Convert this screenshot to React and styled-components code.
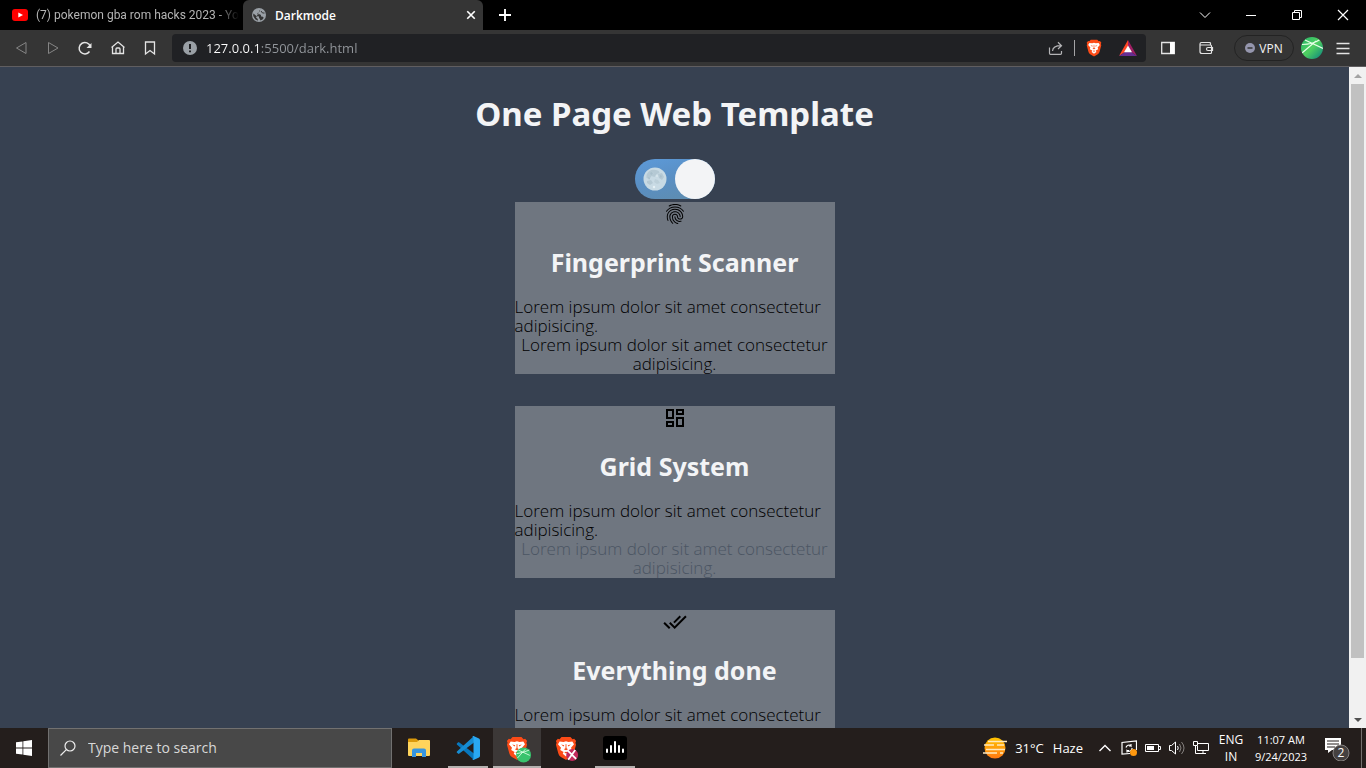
import React, { useState } from "react";
import styled, { createGlobalStyle, css } from "styled-components";
import { MdFingerprint, MdOutlineDashboard, MdDoneAll } from "react-icons/md";

const ui = `"Open Sans", "Noto Sans", sans-serif`;

const Global = createGlobalStyle`
  * { box-sizing: border-box; }
  body { margin: 0; background: #374151; }
  button { font: inherit; color: inherit; background: none; border: 0; padding: 0; cursor: pointer; }
  svg { display: block; flex: none; }
`;

const Screen = styled.div`
  height: 100vh;
  display: flex;
  flex-direction: column;
  overflow: hidden;
  font-family: ${ui};
`;

const TabBar = styled.header`
  display: flex;
  flex: none;
  height: 30px;
  background: #000;
  color: #fff;
`;

const Tab = styled.div`
  display: flex;
  align-items: center;
  width: ${(p) => (p.$active ? 240 : 243)}px;
  padding: 0 ${(p) => (p.$active ? 6 : 2)}px 0 ${(p) => (p.$active ? 8 : 12)}px;
  gap: 8px;
  font-family: ${(p) => (p.$active ? ui : `Roboto, ${ui}`)};
  font-size: 12px;
  font-weight: ${(p) => (p.$active ? 600 : 400)};
  color: ${(p) => (p.$active ? "#fff" : "#b4b4b4")};
  background: ${(p) => (p.$active ? "#353535" : "transparent")};
  border-radius: 6px 6px 0 0;
`;

const TabTitle = styled.span`
  flex: 1;
  min-width: 0;
  overflow: hidden;
  white-space: nowrap;
  ${(p) => p.$fade && css`mask-image: linear-gradient(90deg, #000 88%, transparent 99%);`}
`;

const IconButton = styled.button`
  display: grid;
  place-items: center;
  flex: none;
  width: ${(p) => p.$w || 32}px;
  height: ${(p) => p.$h || 30}px;
`;

const WindowControls = styled.div`
  display: flex;
  margin-left: auto;
`;

const Toolbar = styled.nav`
  display: flex;
  flex: none;
  align-items: center;
  height: 37px;
  padding: 0 3px 0 5px;
  background: #353535;
  border-bottom: 1px solid #605e60;
  color: #e4e4e4;
`;

const AddressBar = styled.form`
  display: flex;
  flex: 1;
  align-items: center;
  height: 28px;
  margin: 0 6px;
  padding: 0 2px 0 11px;
  gap: 9px;
  background: #202124;
  border-radius: 4px;
`;

const AddressInput = styled.input`
  flex: 1;
  min-width: 0;
  padding: 0;
  border: 0;
  outline: 0;
  font: 13px/20px ${ui};
  color: transparent;
  background: linear-gradient(90deg, #fff 55px, #93979c 55px);
  background-clip: text;
`;

const AddressActions = styled.div`
  display: flex;
  align-items: center;
`;

const Divider = styled.span`
  width: 1px;
  height: 16px;
  margin: 0 2px;
  background: #a4a4a6;
`;

const VpnButton = styled.button`
  display: flex;
  align-items: center;
  justify-content: center;
  gap: 4px;
  width: 60px;
  height: 26px;
  margin: 0 7px 0 6px;
  border: 1px solid #232323;
  border-radius: 13px;
  font-size: 12px;
  color: #f4f4f4;
`;

const Viewport = styled.div`
  display: flex;
  flex: 1;
  min-height: 0;
`;

const Page = styled.main`
  flex: 1;
  min-width: 0;
  overflow: hidden;
  display: flex;
  flex-direction: column;
  align-items: center;
  padding-top: 28px;
  background: #374151;
  font-family: "Noto Sans", "Open Sans", sans-serif;
`;

const Title = styled.h1`
  flex: none;
  margin: 0 0 26px;
  font-size: 33px;
  line-height: 38px;
  font-weight: 700;
  color: #f3f4f6;
`;

const Toggle = styled.label`
  position: relative;
  display: flex;
  flex: none;
  align-items: center;
  justify-content: space-between;
  flex-direction: ${(p) => (p.$on ? "row" : "row-reverse")};
  width: 80px;
  height: 40px;
  margin-bottom: 3px;
  border-radius: 20px;
  background: linear-gradient(165deg, #5c98d5 10%, #5a8fc4 45%, #5f8cab 100%);
  cursor: pointer;
`;

const ToggleInput = styled.input`
  position: absolute;
  inset: 0;
  width: 100%;
  height: 100%;
  margin: 0;
  opacity: 0;
`;

const MoonSlot = styled.span`
  display: grid;
  place-items: center;
  width: 40px;
  height: 40px;
`;

const Knob = styled.span`
  width: 40px;
  height: 40px;
  border-radius: 50%;
  background: #f3f4f6;
`;

const Cards = styled.div`
  display: grid;
  gap: 32px;
  width: 320px;
`;

const Card = styled.article`
  display: flex;
  flex-direction: column;
  align-items: center;
  padding-bottom: 1px;
  background: #6f7680;
  color: #000;
`;

const CardTitle = styled.h2`
  margin: 21px 0 19px;
  font-size: 25px;
  line-height: 31px;
  font-weight: 700;
  color: #f3f4f6;
`;

const CardText = styled.p`
  width: 100%;
  margin: 0;
  font-family: "Open Sans", "Noto Sans", sans-serif;
  font-size: 17px;
  font-weight: 350;
  line-height: 19px;
  text-align: ${(p) => (p.$center ? "center" : "left")};
  color: ${(p) => (p.$muted ? "#4b5563" : "#000")};
`;

const Scrollbar = styled.div`
  display: flex;
  flex-direction: column;
  flex: none;
  width: 17px;
  background: #f1f1f1;
`;

const Thumb = styled.div`
  flex: 574;
  margin: 0 2px;
  background: #c1c1c1;
`;

const Track = styled.div`
  flex: 53;
`;

const Taskbar = styled.footer`
  display: flex;
  flex: none;
  align-items: stretch;
  height: 40px;
  background: #241e1c;
  color: #fff;
`;

const SearchBox = styled.label`
  display: flex;
  align-items: center;
  flex: none;
  width: 344px;
  padding: 0 11px;
  gap: 12px;
  background: #484848;
  border: 1px solid #727170;
`;

const SearchInput = styled.input`
  flex: 1;
  min-width: 0;
  padding: 0;
  border: 0;
  outline: 0;
  background: none;
  font: 14px/20px ${ui};
  color: #fff;
  &::placeholder { color: #d8d8d8; opacity: 1; }
`;

const Apps = styled.div`
  display: flex;
  gap: 1px;
  margin-left: 3px;
`;

const AppButton = styled.button`
  display: grid;
  place-items: center;
  width: 48px;
  background: ${(p) => (p.$active ? "#3c3837" : "transparent")};
  ${(p) => p.$running && css`
    background-image: linear-gradient(#b5b1af, #b5b1af);
    background-repeat: no-repeat;
    background-position: bottom;
    background-size: ${p.$active ? 48 : 40}px 2px;
  `}
`;

const Tray = styled.div`
  display: flex;
  align-items: center;
  margin-left: auto;
`;

const Weather = styled.button`
  display: flex;
  align-items: center;
  gap: 8px;
  margin-right: 10px;
  font-size: 13px;
`;

const Temp = styled.span`
  margin-right: 1px;
`;

const TrayText = styled.button`
  width: ${(p) => p.$w}px;
  font-size: ${(p) => p.$small ? 11 : 12}px;
  line-height: 17px;
  text-align: center;
  white-space: nowrap;
`;

const ShowDesktop = styled.button`
  align-self: stretch;
  width: 5px;
  border-left: 1px solid #73706e;
`;

const Line = ({ size = 16, w = 1, children, ...rest }) => (
  <svg width={size} height={size} viewBox="0 0 16 16" fill="none" stroke="currentColor" strokeWidth={w} aria-hidden="true" {...rest}>
    {children}
  </svg>
);

const YouTube = () => (
  <svg width="16" height="12" viewBox="0 0 16 12" aria-hidden="true">
    <rect width="16" height="12" rx="3" fill="#f00" />
    <path d="M6.3 3.4 11 6 6.3 8.6Z" fill="#fff" />
  </svg>
);

const Globe = () => (
  <svg width="16" height="16" viewBox="0 0 16 16" aria-hidden="true">
    <circle cx="8" cy="8" r="7" fill="#9aa0a6" />
    <path d="M9.500 2.500 8 4v1.500L6.500 6v1.200H9l1 1v1.300h1.300l1.500 1.300-1.300 1.700-2.200 1-.3-1.500L8 11V9.500L5.500 9 2.300 6.500 2.200 9l2 3.200 2.600 1.500V12L5 10.500" fill="#353535" />
    <path d="m10 4 1.500 2h2" fill="none" stroke="#353535" />
  </svg>
);

const BraveLion = ({ width = 16, badge }) => (
  <svg width={width} height={width * 1.12} viewBox="0 0 25 28" aria-hidden="true" overflow="visible">
    <path d="M7.400 1h10.200l2.300 2.600 1.900-.4 2.200 2.500-.8 2 .7 2.200-2.600 9.600c-.6 2.200-1.800 3.500-3.500 4.600l-4.500 2.700c-.5.3-1.100.3-1.600 0l-4.500-2.700C5.500 23 4.300 21.700 3.700 19.500L1.100 9.900l.7-2.200-.8-2L3.200 3.200l1.900.4Z" fill="#fb4b17" />
    <path d="m5.300 6.200 4.400.5 2.800-.8 2.800.8 4.400-.5 1.900 3.100-3.400 4 .9 2.700-3.800 2.100.9 2.100-3.700 3-3.700-3 .9-2.100-3.800-2.100.9-2.700-3.400-4Z" fill="#fff" />
    <path d="m7 9.800 3.500.6-.8 1.600Zm11 0-3.500.6.8 1.600ZM12.100 9h.8l.2 5 1.800 1.100-2.400 1-2.400-1 1.800-1.100ZM10.500 18.600l2-.8 2 .8-2 1.300Z" fill="#fb4b17" />
    {badge === "green" && (
      <g>
        <circle cx="20" cy="21.500" r="8.500" fill="#38c36d" />
        <path d="m12.500 20 7-1.500 7-2.500M14 16l13 6m-14 3 9-10" stroke="#d9ffe2" strokeWidth="1" fill="none" />
      </g>
    )}
    {badge === "pink" && (
      <g>
        <circle cx="19.500" cy="21.500" r="6.800" fill="#c32a5d" />
        <path d="m14 16 10 10m-9 1 8-11" stroke="#fff" strokeWidth="2" />
      </g>
    )}
  </svg>
);

const BatTriangle = () => (
  <svg width="18" height="16" viewBox="0 0 18 16" aria-hidden="true">
    <path d="M9 0 0 16l6-4 3-6Z" fill="#ff4724" />
    <path d="m9 0 9 16-6-4-3-6Z" fill="#9e1f63" />
    <path d="m0 16 6-4h6l6 4Z" fill="#662d91" />
    <path d="m9 5.500 4 6.800H5Z" fill="#fff" />
  </svg>
);

const Avatar = () => (
  <svg width="22" height="22" viewBox="0 0 22 22" aria-hidden="true">
    <defs>
      <linearGradient id="avatarFill" x1="0" y1="0" x2="1" y2="1">
        <stop stopColor="#27b36b" />
        <stop offset=".5" stopColor="#4fd060" />
        <stop offset="1" stopColor="#087f80" />
      </linearGradient>
      <clipPath id="avatarClip"><circle cx="11" cy="11" r="11" /></clipPath>
    </defs>
    <g clipPath="url(#avatarClip)">
      <rect width="22" height="22" fill="url(#avatarFill)" />
      <path d="M1 7.500c8 0 13-1.500 18-5M4 3l18 8.500M1 16 15 4" fill="none" stroke="#e6ffe6" strokeWidth="1.200" />
    </g>
  </svg>
);

const Moon = () => (
  <svg width="24" height="24" viewBox="0 0 24 24" aria-hidden="true">
    <circle cx="12" cy="12" r="11.500" fill="#c8dae4" />
    <path d="M3.500 8c2-5 6-6 9-5 2 0 4 1 4 3l-3 1-2 3-3-1-2 3-3-1ZM15 7l4-1 2 4-2 3-3-2ZM4 14l4-1 2 3-3 2-3-2Z" fill="#b5c9d4" />
    <path d="m12 12 3 1 2 3-3 1-3-2ZM9 5l2 1-2 2Z" fill="#bccfd9" />
    <path d="m7 6 2-1 1 2-2 1Zm10 2 2 1-1 2-1-1ZM5 10l2 1-1 2Z" fill="#a9bfcb" />
    <circle cx="11" cy="20" r="1.200" fill="#e6f1f5" />
    <circle cx="14" cy="9" r="1" fill="#d8e6ed" />
  </svg>
);

const WindowsLogo = () => (
  <svg width="16" height="16" viewBox="0 0 16 16" fill="#fff" aria-hidden="true">
    <path d="m0 2.300 6.500-.9v6.200H0Zm7.300-1L16 0v7.600H7.300ZM0 8.400h6.500v6.200L0 13.700Zm7.300 0H16V16l-8.700-1.200Z" />
  </svg>
);

const Explorer = () => (
  <svg width="22" height="20" viewBox="0 0 22 20" aria-hidden="true">
    <path d="M0 1.500Q0 .5 1 .5h7l2.500 2V6H0Z" fill="#dc9a0b" />
    <path d="M0 4h9l2-2h10q1 0 1 1v14q0 1-1 1H1q-1 0-1-1Z" fill="#ffd45c" />
    <path d="M4 19v-6.500q0-2 2-2h10q2 0 2 2V19h-4v-4H8v4Z" fill="#3795df" />
  </svg>
);

const VsCode = () => (
  <svg width="24" height="24" viewBox="0 0 24 24" aria-hidden="true">
    <path d="m1 7.300 1.700-1.400L18 17.500V24L.9 8.600Q.4 8 1 7.300Z" fill="#0877bd" />
    <path d="m1 16.700 1.700 1.400L18 6.500V0L.9 15.400q-.5.600.1 1.300Z" fill="#168cd2" />
    <path d="m17.500 0 5.500 2.600q1 .5 1 1.600v15.600q0 1.100-1 1.600L17.500 24q-.9.200-1.200-.5 1.200.1 1.200-1.500V2q0-1.600-1.200-1.500.4-.7 1.200-.5Z" fill="#29a8f2" />
  </svg>
);

const Equalizer = () => (
  <svg width="24" height="24" viewBox="0 0 24 24" aria-hidden="true">
    <rect width="24" height="24" rx="3" fill="#000" />
    <path d="M4 13.500V16m4-6v6m4-10v10m4-6v6m4-2.500V16" stroke="#fff" strokeWidth="2" strokeLinecap="round" />
  </svg>
);

const HazeSun = () => (
  <svg width="24" height="22" viewBox="0 0 24 22" aria-hidden="true">
    <defs>
      <linearGradient id="sunFill" x1="0" y1="0" x2="0" y2="1">
        <stop stopColor="#ffc400" />
        <stop offset="1" stopColor="#ff7812" />
      </linearGradient>
    </defs>
    <circle cx="12" cy="11" r="10.500" fill="url(#sunFill)" />
    <path d="M5 4.500h19M1 8h10m3 0h7M3 12.500h19M0 16h14m3 0h3" stroke="#ffe9be" strokeWidth="1.700" />
  </svg>
);

const features = [
  { title: "Fingerprint Scanner", Icon: MdFingerprint, muted: false },
  { title: "Grid System", Icon: MdOutlineDashboard, muted: true },
  { title: "Everything done", Icon: MdDoneAll, muted: true },
];

const lorem = "Lorem ipsum dolor sit amet consectetur adipisicing.";

function BrowserTabs() {
  return (
    <TabBar>
      <Tab>
        <YouTube />
        <TabTitle $fade>(7) pokemon gba rom hacks 2023 - Yo</TabTitle>
      </Tab>
      <Tab $active>
        <Globe />
        <TabTitle>Darkmode</TabTitle>
        <IconButton $w={12} aria-label="Close tab"><Line size={12} w={2.2}><path d="m3 3 10 10M13 3 3 13" /></Line></IconButton>
      </Tab>
      <IconButton $w={44} aria-label="New tab"><Line size={12} w={2.5}><path d="M8 0v16M0 8h16" /></Line></IconButton>
      <WindowControls>
        <IconButton $w={46} aria-label="Search tabs"><Line><path d="m3 5.500 5 5 5-5" /></Line></IconButton>
        <IconButton $w={46} aria-label="Minimize"><Line><path d="M3 8.500h10" /></Line></IconButton>
        <IconButton $w={46} aria-label="Restore"><Line><path d="M3.500 5.500h7v7h-7ZM5.500 5.500v-2h7v7h-2" /></Line></IconButton>
        <IconButton $w={46} aria-label="Close"><Line w={1.2}><path d="m3 3 10 10M13 3 3 13" /></Line></IconButton>
      </WindowControls>
    </TabBar>
  );
}

function BrowserToolbar() {
  return (
    <Toolbar>
      <IconButton aria-label="Back"><Line color="#858585"><path d="M13 2.500v11L3.500 8Z" /></Line></IconButton>
      <IconButton aria-label="Forward"><Line color="#858585"><path d="M3.500 2.500v11L13 8Z" /></Line></IconButton>
      <IconButton aria-label="Reload"><Line w={1.5}><path d="M12.500 11.500a5.700 5.700 0 1 1 .8-5" /><path d="M14.500 3v5h-5Z" fill="currentColor" stroke="none" /></Line></IconButton>
      <IconButton $w={33} aria-label="Home"><Line w={1.3}><path d="M2.500 7v6.500h11V7M1.500 7.500 8 2l6.500 5.500M6 13.500V9q0-1 1-1h2q1 0 1 1v4.500" /></Line></IconButton>
      <IconButton aria-label="Bookmark"><Line w={1.3}><path d="M3.500 2h9v12L8 10.500 3.500 14Z" /></Line></IconButton>
      <AddressBar onSubmit={(e) => e.preventDefault()}>
        <svg width="14" height="14" viewBox="0 0 14 14" aria-hidden="true"><circle cx="7" cy="7" r="7" fill="#9aa0a6" /><path d="M7 3v5m0 1.500v1.700" stroke="#202124" strokeWidth="2" /></svg>
        <AddressInput aria-label="Address" defaultValue="127.0.0.1:5500/dark.html" />
        <AddressActions>
          <IconButton $h={28} aria-label="Share"><Line color="#b4b4b6" w={1.2}><path d="M1.500 7.500v5.800q0 1 1 1h10q1 0 1-1V11M4.500 11c.3-3.500 3-5.300 8.500-5.300M10 2.300l3.500 3.400L10 9" /></Line></IconButton>
          <Divider />
          <IconButton $w={34} $h={28} aria-label="Brave Shields"><BraveLion width={16} /></IconButton>
          <IconButton $w={33} $h={28} aria-label="Brave Rewards"><BatTriangle /></IconButton>
        </AddressActions>
      </AddressBar>
      <IconButton aria-label="Sidebar"><Line w={1.3}><path d="M1.700 2.500h12.600v11H1.700Z" /><path d="M10 2h4.500v12H10Z" fill="#fff" stroke="none" /></Line></IconButton>
      <IconButton $w={44} aria-label="Wallet"><Line w={1.2}><path d="M12.500 4.500v-1q0-1-1-1h-8Q2 2.500 2 4v7.500q0 2 2 2h8.500q1 0 1-1V6q0-1-1-1H2.500M14.500 7.500H10q-1.500 0-1.500 1.500t1.500 1.500h4.500Z" /></Line></IconButton>
      <VpnButton>
        <svg width="10" height="10" viewBox="0 0 10 10" aria-hidden="true"><circle cx="5" cy="5" r="5" fill="#9596ad" /><path d="M2.500 5h5" stroke="#353535" strokeWidth="1.500" /></svg>
        VPN
      </VpnButton>
      <IconButton $w={22} aria-label="Profile"><Avatar /></IconButton>
      <IconButton $w={40} aria-label="Menu"><Line w={1.3}><path d="M1.500 3.500h13M1.500 8.500h13M1.500 13.500h13" /></Line></IconButton>
    </Toolbar>
  );
}

function TemplatePage() {
  const [dark, setDark] = useState(true);
  return (
    <Page>
      <Title>One Page Web Template</Title>
      <Toggle $on={dark}>
        <ToggleInput type="checkbox" aria-label="Dark mode" checked={dark} onChange={(e) => setDark(e.target.checked)} />
        <MoonSlot><Moon /></MoonSlot>
        <Knob />
      </Toggle>
      <Cards>
        {features.map(({ title, Icon, muted }) => (
          <Card key={title}>
            <Icon size={24} />
            <CardTitle>{title}</CardTitle>
            <CardText>{lorem}</CardText>
            <CardText $center $muted={muted}>{lorem}</CardText>
          </Card>
        ))}
      </Cards>
    </Page>
  );
}

function WindowsTaskbar() {
  return (
    <Taskbar>
      <IconButton $w={48} $h={40} aria-label="Start"><WindowsLogo /></IconButton>
      <SearchBox>
        <Line w={1.2} color="#eee"><circle cx="10" cy="6" r="5" /><path d="M6.300 9.700.5 15.500" /></Line>
        <SearchInput type="text" placeholder="Type here to search" aria-label="Search" />
      </SearchBox>
      <Apps>
        <AppButton aria-label="File Explorer"><Explorer /></AppButton>
        <AppButton $running aria-label="Visual Studio Code"><VsCode /></AppButton>
        <AppButton $running $active aria-label="Brave"><BraveLion width={22} badge="green" /></AppButton>
        <AppButton aria-label="Brave second profile"><BraveLion width={22} badge="pink" /></AppButton>
        <AppButton $running aria-label="Audio"><Equalizer /></AppButton>
      </Apps>
      <Tray>
        <Weather><HazeSun /><Temp>31°C</Temp><span>Haze</span></Weather>
        <IconButton $w={24} $h={40} aria-label="Hidden icons"><Line w={1.4}><path d="m2.500 11 5.500-5.500 5.500 5.500" /></Line></IconButton>
        <IconButton $w={24} $h={40} aria-label="Update">
          <Line w={1.2}><path d="M9 13.500 1 14V2.500L15.500 1v9M5 7.500a3 3 0 0 1 5-1.500V4M11 8a3 3 0 0 1-5 2.500v2M10 6H8M6 10.500h2" /><circle cx="12.500" cy="12.500" r="3.500" fill="#ff980f" stroke="none" /></Line>
        </IconButton>
        <IconButton $w={24} $h={40} aria-label="Battery"><Line><path d="M.5 4.500h13v7H.5Zm13 2h2v3h-2" /><path d="M2 6h7v4H2Z" fill="#fff" stroke="none" /></Line></IconButton>
        <IconButton $w={24} $h={40} aria-label="Volume"><Line><path d="M.5 5.500h2l4-3.500v12l-4-3.500h-2ZM8.500 6q1.500 2 0 4" /><path d="M10.500 4q3 4 0 8M12.500 2q5 6 0 12" stroke="#85817f" /></Line></IconButton>
        <IconButton $w={24} $h={40} aria-label="Network"><Line><path d="M5 3.500h10.500v7h-11V6M.5 1.500h4v4h-4Zm2 4v8H9m1-3v3m-3 0h6" /></Line></IconButton>
        <TrayText $w={36}>ENG<br />IN</TrayText>
        <TrayText $w={64} $small>11:07 AM<br />9/24/2023</TrayText>
        <IconButton $w={48} $h={40} aria-label="2 notifications">
          <svg width="26" height="26" viewBox="0 0 26 26" aria-hidden="true">
            <path d="M1 3h16v12H8l-4 3v-3H1Z" fill="#fff" />
            <path d="M3 6h12M3 9h12M3 12h8" stroke="#241e1c" />
            <circle cx="17" cy="18" r="8" fill="#454140" stroke="#85817f" />
            <text x="17" y="22" textAnchor="middle" fontSize="12" fill="#fff">2</text>
          </svg>
        </IconButton>
        <ShowDesktop aria-label="Show desktop" />
      </Tray>
    </Taskbar>
  );
}

export default function App() {
  return (
    <Screen>
      <Global />
      <BrowserTabs />
      <BrowserToolbar />
      <Viewport>
        <TemplatePage />
        <Scrollbar>
          <IconButton $w={17} $h={17} aria-label="Scroll up"><svg width="8" height="4" viewBox="0 0 8 4"><path d="M0 4 4 0l4 4Z" fill="#a3a3a3" /></svg></IconButton>
          <Thumb />
          <Track />
          <IconButton $w={17} $h={17} aria-label="Scroll down"><svg width="8" height="4" viewBox="0 0 8 4"><path d="m0 0 4 4 4-4Z" fill="#505050" /></svg></IconButton>
        </Scrollbar>
      </Viewport>
      <WindowsTaskbar />
    </Screen>
  );
}
